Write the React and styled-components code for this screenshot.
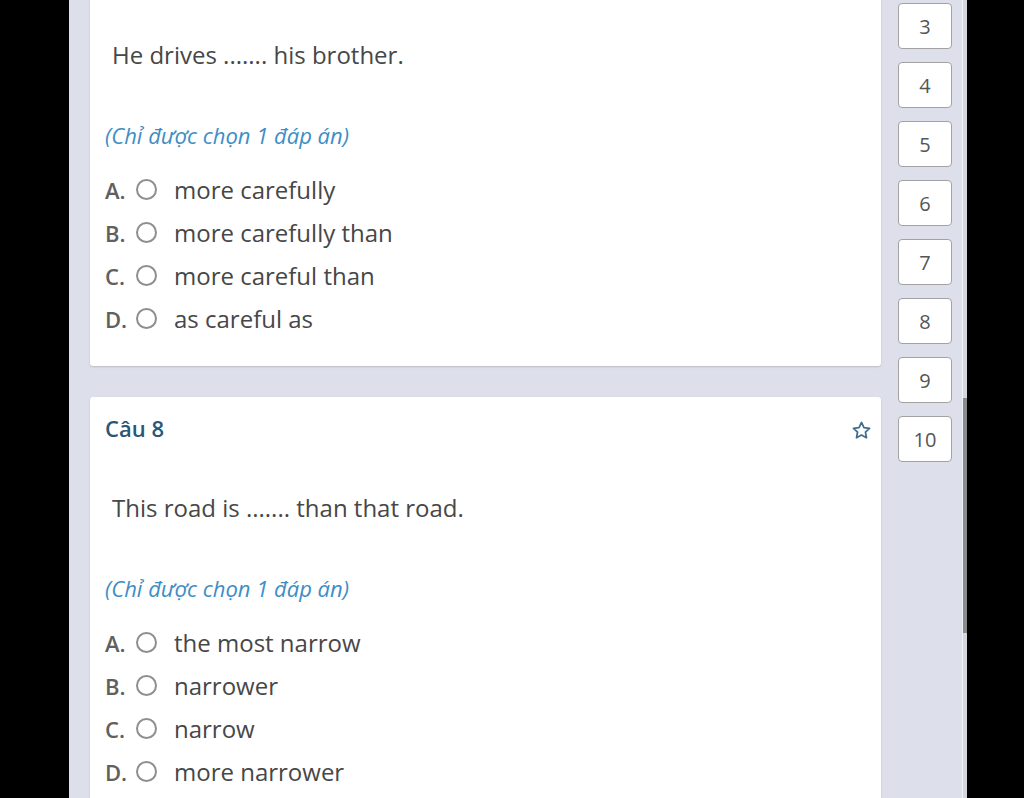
import React from 'react';
import styled, { createGlobalStyle } from 'styled-components';

const GlobalStyle = createGlobalStyle`
  html, body {
    margin: 0;
    padding: 0;
    background: #000;
  }
  body {
    font-family: "Open Sans", "Noto Sans", sans-serif;
  }
`;

const Screen = styled.div`
  display: flex;
  width: 1024px;
  height: 798px;
  overflow: hidden;
  background: #000;
`;

const Frame = styled.div`
  display: flex;
  margin-left: 69px;
  width: 898px;
  height: 100%;
  background: #dde0ea;
  overflow: hidden;
`;

const Main = styled.div`
  width: 812px;
  padding-left: 21px;
  box-sizing: border-box;
`;

const Column = styled.div`
  display: flex;
  flex-direction: column;
  gap: 31px;
  margin-top: -56px;
`;

const Card = styled.div`
  background: #fff;
  border-radius: 3px;
  box-shadow: 0 1px 2px rgba(0, 0, 0, 0.16);
  padding: 18px 11px 26px 15px;
`;

const CardHeader = styled.div`
  display: flex;
  justify-content: space-between;
  align-items: center;
  height: 26px;
`;

const QuestionNo = styled.div`
  font-size: 22px;
  font-weight: 600;
  color: #2b5675;
`;

const StarButton = styled.div`
  display: flex;
  align-items: center;
  margin-top: 4px;
  margin-right: -2px;
`;

const QuestionText = styled.div`
  margin-top: 51px;
  padding-left: 7px;
  font-size: 24px;
  line-height: 32px;
  color: #474747;
`;

const Hint = styled.div`
  margin-top: 50px;
  font-size: 22px;
  line-height: 28px;
  font-style: italic;
  color: #3d8ec6;
`;

const Options = styled.div`
  margin-top: 19px;
  display: flex;
  flex-direction: column;
`;

const OptionRow = styled.div`
  display: flex;
  align-items: center;
  height: 43px;
`;

const Letter = styled.span`
  width: 31px;
  font-size: 22px;
  font-weight: 600;
  color: #606060;
`;

const Radio = styled.span`
  width: 21px;
  height: 21px;
  box-sizing: border-box;
  border: 2px solid #8e8e8e;
  border-radius: 50%;
  margin-right: 17px;
`;

const OptionText = styled.span`
  font-size: 24px;
  color: #474747;
`;

const Sidebar = styled.div`
  width: 81px;
  padding: 3px 0 0 17px;
  box-sizing: border-box;
  display: flex;
  flex-direction: column;
  gap: 13px;
`;

const NumButton = styled.div`
  width: 54px;
  height: 46px;
  box-sizing: border-box;
  border: 1px solid #a2a2a2;
  border-radius: 4px;
  background: #fff;
  display: flex;
  align-items: center;
  justify-content: center;
  font-size: 20px;
  color: #555;
`;

const Track = styled.div`
  width: 5px;
  height: 100%;
  background: #d3d6de;
  border-left: 1px solid #eef0f5;
  box-sizing: border-box;
`;

const Thumb = styled.div`
  margin-top: 398px;
  height: 235px;
  background: #8b8b8d;
`;

const StarIcon = () => (
  <svg width="21" height="21" viewBox="0 0 24 24" fill="none" stroke="#3f6d8e" strokeWidth="2" strokeLinejoin="round">
    <path d="M12 2.8l2.8 5.9 6.4.8-4.7 4.4 1.2 6.4L12 17.2l-5.7 3.1 1.2-6.4-4.7-4.4 6.4-.8z" />
  </svg>
);

const questions = [
  {
    no: 7,
    text: 'He drives ....... his brother.',
    options: ['more carefully', 'more carefully than', 'more careful than', 'as careful as'],
  },
  {
    no: 8,
    text: 'This road is ....... than that road.',
    options: ['the most narrow', 'narrower', 'narrow', 'more narrower'],
  },
];

const letters = ['A.', 'B.', 'C.', 'D.'];

const QuestionCard = ({ no, text, options }) => (
  <Card>
    <CardHeader>
      <QuestionNo>Câu {no}</QuestionNo>
      <StarButton>
        <StarIcon />
      </StarButton>
    </CardHeader>
    <QuestionText>{text}</QuestionText>
    <Hint>(Chỉ được chọn 1 đáp án)</Hint>
    <Options>
      {options.map((o, i) => (
        <OptionRow key={o}>
          <Letter>{letters[i]}</Letter>
          <Radio />
          <OptionText>{o}</OptionText>
        </OptionRow>
      ))}
    </Options>
  </Card>
);

const App = () => (
  <>
    <GlobalStyle />
    <Screen>
      <Frame>
        <Main>
          <Column>
            {questions.map((q) => (
              <QuestionCard key={q.no} {...q} />
            ))}
          </Column>
        </Main>
        <Sidebar>
          {[3, 4, 5, 6, 7, 8, 9, 10].map((n) => (
            <NumButton key={n}>{n}</NumButton>
          ))}
        </Sidebar>
        <Track>
          <Thumb />
        </Track>
      </Frame>
    </Screen>
  </>
);

export default App;
